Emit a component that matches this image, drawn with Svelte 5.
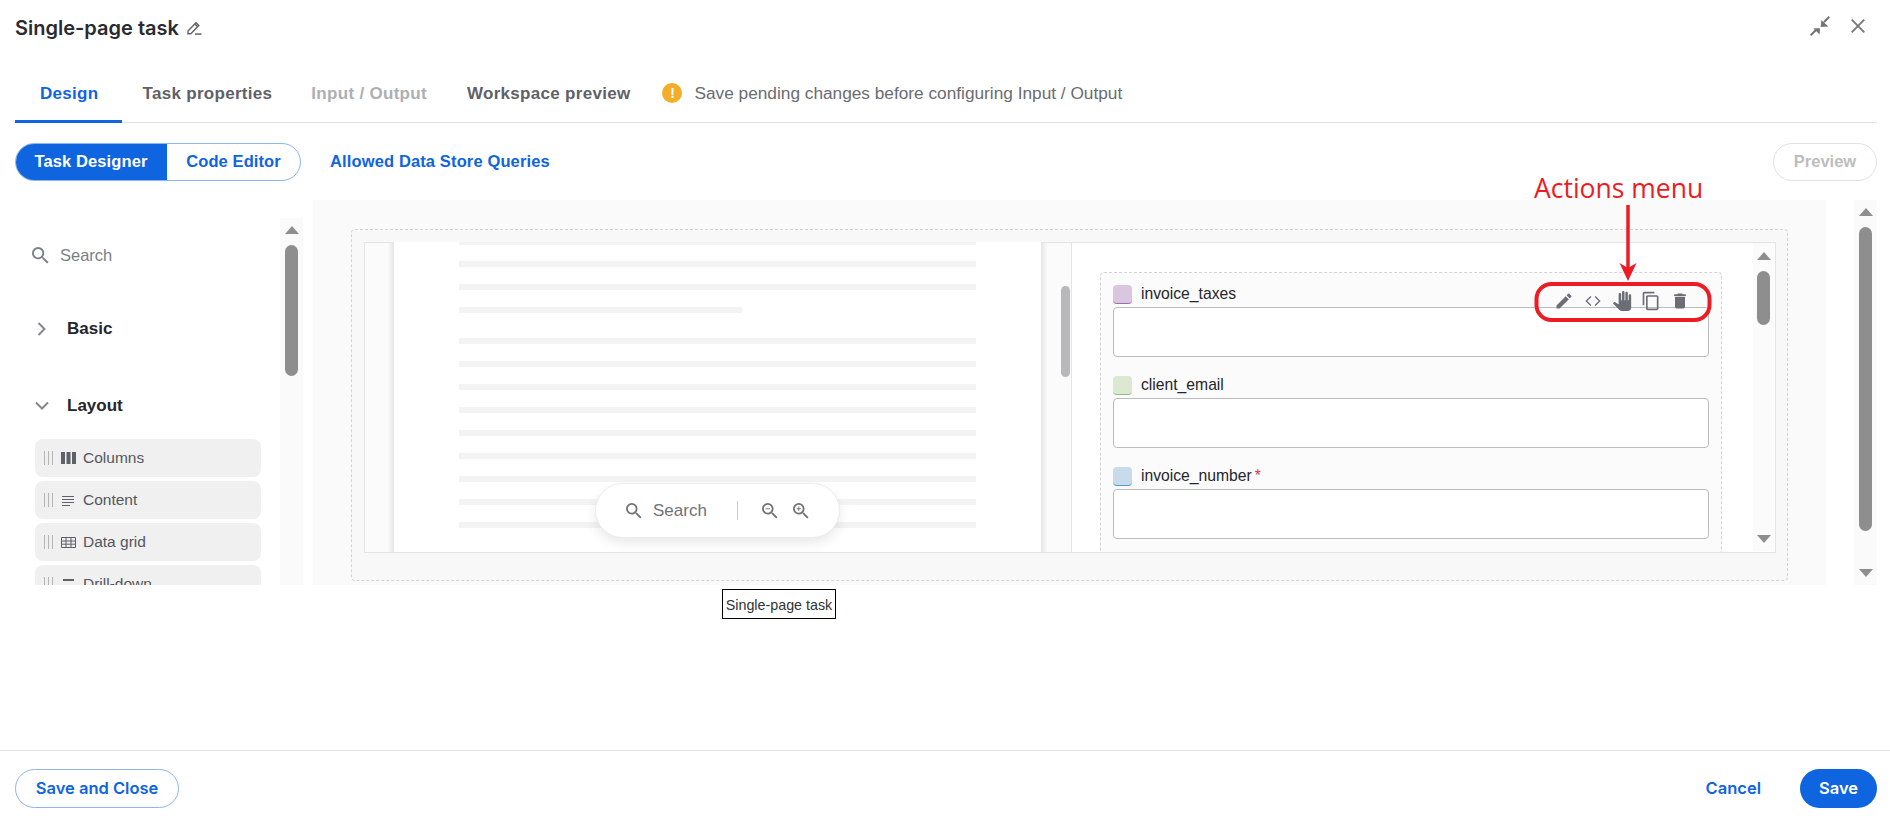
<script>
  const sp = 'M15.5 14h-.79l-.28-.27A6.471 6.471 0 0 0 16 9.5 6.5 6.5 0 1 0 9.5 16c1.61 0 3.09-.59 4.23-1.57l.27.28v.79l5 4.99L20.49 19l-4.99-5zm-6 0C7.01 14 5 11.99 5 9.5S7.01 5 9.5 5 14 7.01 14 9.5 11.99 14 9.5 14z';
  const lines = [
    { w: 100, h: 2, cls: 'first' }, { w: 100 }, { w: 100 }, { w: 283, px: true }, { w: 100, cls: 'para' },
    { w: 100 }, { w: 100 }, { w: 100 }, { w: 100 }, { w: 100 }, { w: 100 }, { w: 100 }, { w: 100 }
  ];
  const items = [
    { label: 'Columns', icon: 'cols' }, { label: 'Content', icon: 'content' },
    { label: 'Data grid', icon: 'grid' }, { label: 'Drill-down', icon: 'drill' }
  ];
  const fields = [
    { name: 'invoice_taxes', cls: 'purple', tools: true },
    { name: 'client_email', cls: 'green' },
    { name: 'invoice_number', cls: 'blue', req: true }
  ];
</script>

<div class="app">
  <header class="head">
    <div class="title-wrap">
      <h1>Single-page task</h1>
      <svg class="title-edit" viewBox="0 0 15 14" width="15" height="14" aria-hidden="true">
        <path d="M1 10l8-8.200 2.800 2.800-8 8.200H1z M7.800 3l2.800 2.800" fill="none" stroke="#5f6268" stroke-width="1.400"/>
        <path d="M8 12.300h6.500v1.500H8z" fill="#5f6268"/>
      </svg>
    </div>
    <div class="win-actions">
      <svg viewBox="0 0 20 20" width="20" height="20" aria-hidden="true">
        <path d="M.7 19.300L6 14M19.300.7L14 6" stroke="#757575" stroke-width="2" fill="none"/>
        <path d="M10.700 11l.7-7 6.900 6.400zM10 12.300H3.300l6.300 6.200z" fill="#757575"/>
      </svg>
      <svg viewBox="0 0 14 14" width="14" height="14" aria-hidden="true">
        <path d="M.7.7l12.600 12.600M13.300.7L.7 13.300" stroke="#757575" stroke-width="1.800" fill="none"/>
      </svg>
    </div>
  </header>

  <nav class="tabs">
    <span class="tab active">Design</span>
    <span class="tab">Task properties</span>
    <span class="tab disabled">Input / Output</span>
    <span class="tab">Workspace preview</span>
    <span class="notice">
      <span class="warn">!</span>
      Save pending changes before configuring Input / Output
    </span>
  </nav>

  <div class="toolbar">
    <div class="segment">
      <span class="seg on">Task Designer</span>
      <span class="seg">Code Editor</span>
    </div>
    <span class="allowed">Allowed Data Store Queries</span>
    <span class="preview">Preview</span>
  </div>

  <div class="workspace">
    <aside class="palette">
      <div class="palette-list">
        <div class="pal-search">
          <svg viewBox="3 3 18 18" width="17" height="17" aria-hidden="true"><path d={sp} fill="#7b7f86"/></svg>
          <span>Search</span>
        </div>
        <div class="group basic">
          <svg viewBox="0 0 10 14" width="10" height="14" aria-hidden="true"><path d="M1.500 1l6 6-6 6" fill="none" stroke="#85878c" stroke-width="2"/></svg>
          <strong>Basic</strong>
        </div>
        <div class="group layout">
          <svg viewBox="0 0 14 10" width="14" height="10" aria-hidden="true"><path d="M1 1.500l6 6 6-6" fill="none" stroke="#85878c" stroke-width="2"/></svg>
          <strong>Layout</strong>
        </div>
        <div class="items">
          {#each items as it}
            <div class="item">
              <span class="grip"><i></i><i></i><i></i></span>
              <svg class="item-ic" viewBox="0 0 15 12" width="15" height="12" aria-hidden="true">
                {#if it.icon === 'cols'}
                  <path d="M0 0h4v12H0zM5.500 0h4v12h-4zM11 0h4v12h-4z" fill="#5f6168"/>
                {:else if it.icon === 'content'}
                  <path d="M1 2h12v1H1zM1 5h12v1H1zM1 8h12v1H1zM1 11h8v1H1z" fill="#5f6168"/>
                {:else if it.icon === 'grid'}
                  <path d="M.5 1.500h14v10H.5zM.5 5h14M.5 8.200h14M5 1.500v10M10 1.500v10" fill="none" stroke="#5f6168"/>
                {:else}
                  <path d="M2 1h11v2H2z" fill="#5f6168"/>
                {/if}
              </svg>
              <span>{it.label}</span>
            </div>
          {/each}
        </div>
      </div>
      <div class="track pal-track">
        <span class="arrow up"></span>
        <span class="thumb pal-thumb"></span>
      </div>
    </aside>

    <section class="canvas">
      <div class="dashed">
        <div class="frame">
          <div class="doc">
            <div class="gutter"></div>
            <div class="page">
              {#each lines as l}
                <div class="line {l.cls ?? ''}" style:width={l.px ? l.w + 'px' : '100%'}></div>
              {/each}
            </div>
            <div class="gutter right"><span class="doc-thumb"></span></div>
            <div class="pill">
              <svg viewBox="3 3 18 18" width="16" height="16" aria-hidden="true"><path d={sp} fill="#6f7278"/></svg>
              <span class="pill-text">Search</span>
              <span class="pill-div"></span>
              <svg viewBox="3 3 18 18" width="16" height="16" aria-hidden="true"><path d={sp} fill="#6f7278"/><path d="M7 9h5v1H7z" fill="#6f7278"/></svg>
              <svg viewBox="3 3 18 18" width="16" height="16" aria-hidden="true"><path d={sp} fill="#6f7278"/><path d="M12 10h-2v2H9v-2H7V9h2V7h1v2h2v1z" fill="#6f7278"/></svg>
            </div>
          </div>
          <div class="form-pane">
            <div class="form-box">
              {#each fields as f}
                <div class="field">
                  <div class="field-label">
                    <span class="swatch {f.cls}"></span>
                    <span class="field-name">{f.name}</span>
                    {#if f.req}<span class="req">*</span>{/if}
                  </div>
                  <div class="input"></div>
                  {#if f.tools}
                    <div class="tools">
                      <svg viewBox="0 0 24 24" width="20" height="20" aria-hidden="true"><path d="M3 17.250V21h3.750L17.810 9.940l-3.750-3.750L3 17.250zM20.710 7.040a1 1 0 0 0 0-1.410l-2.340-2.340a1 1 0 0 0-1.410 0l-1.830 1.830 3.750 3.750 1.830-1.830z"/></svg>
                      <svg viewBox="0 0 24 24" width="20" height="20" aria-hidden="true"><path d="M9.500 6.500L4 12l5.500 5.500M14.500 6.500L20 12l-5.500 5.500" fill="none" stroke="#6b6e76" stroke-width="1.600"/></svg>
                      <svg viewBox="0 0 24 24" width="20" height="20" aria-hidden="true"><path d="M23 5.500V20c0 2.200-1.800 4-4 4h-7.300c-1.080 0-2.100-.43-2.850-1.190L1 14.830s1.260-1.230 1.300-1.250c.22-.19.49-.29.79-.29.22 0 .42.060.6.160.040.010 4.310 2.460 4.310 2.460V4c0-.83.67-1.500 1.500-1.500S11 3.170 11 4v7h1V1.500c0-.83.67-1.500 1.500-1.500S15 .67 15 1.500V11h1V2.500c0-.83.67-1.500 1.500-1.500s1.500.67 1.500 1.500V11h1V5.500c0-.83.67-1.500 1.500-1.500s1.500.67 1.500 1.500z"/></svg>
                      <svg viewBox="0 0 24 24" width="20" height="20" aria-hidden="true"><path d="M16 1H4c-1.100 0-2 .9-2 2v14h2V3h12V1zm3 4H8c-1.100 0-2 .9-2 2v14c0 1.100.9 2 2 2h11c1.100 0 2-.9 2-2V7c0-1.100-.9-2-2-2zm0 16H8V7h11v14z"/></svg>
                      <svg viewBox="0 0 24 24" width="20" height="20" aria-hidden="true"><path d="M6 19c0 1.100.9 2 2 2h8c1.100 0 2-.9 2-2V7H6v12zM19 4h-3.500l-1-1h-5l-1 1H5v2h14V4z"/></svg>
                    </div>
                  {/if}
                </div>
              {/each}
            </div>
            <div class="track form-track">
              <span class="arrow up"></span>
              <span class="thumb form-thumb"></span>
              <span class="arrow down"></span>
            </div>
          </div>
        </div>
      </div>
    </section>

    <div class="track main-track">
      <span class="arrow up"></span>
      <span class="thumb main-thumb"></span>
      <span class="arrow down"></span>
    </div>
  </div>

  <div class="caption">Single-page task</div>

  <footer class="foot">
    <span class="btn-outline">Save and Close</span>
    <span class="cancel">Cancel</span>
    <span class="btn-save">Save</span>
  </footer>

  <div class="note">Actions menu</div>
  <svg class="marks" viewBox="0 0 190 125" width="190" height="125" aria-hidden="true">
    <path d="M96 1v64" stroke="#ed1c24" stroke-width="3.500" fill="none"/>
    <path d="M96 77l-8.500-18 8.500 5 8.500-5z" fill="#ed1c24"/>
    <rect x="4.500" y="80" width="173" height="36" rx="15" fill="none" stroke="#ed1c24" stroke-width="4"/>
  </svg>
</div>

<style>
  :global(body) { margin: 0; background: #fff; }
  .app {
    position: relative;
    height: 818px;
    overflow: hidden;
    display: flex;
    flex-direction: column;
    font-family: "Liberation Sans", Arial, sans-serif;
    color: #25262b;
  }
  .head {
    height: 56px;
    flex: none;
    display: flex;
    align-items: center;
    justify-content: space-between;
    padding: 0 25px 0 15px;
    box-sizing: border-box;
  }
  .title-wrap { display: flex; align-items: center; gap: 8px; }
  h1 { margin: 0; font: 600 20px/1 Inter, sans-serif; color: #2a2b30; }
  .title-edit { margin-top: -1px; }
  .win-actions { display: flex; align-items: center; gap: 21px; margin-top: -4px; }

  .tabs {
    height: 67px;
    flex: none;
    box-sizing: border-box;
    margin: 0 13px 0 15px;
    display: flex;
    align-items: stretch;
    border-bottom: 1px solid #e2e2e2;
  }
  .tab {
    display: flex;
    align-items: center;
    padding: 11px 20px 0;
    font-size: 17px;
    font-weight: 700;
    letter-spacing: .3px;
    color: #5f6168;
    margin-bottom: -1px;
    border-bottom: 3px solid transparent;
  }
  .tab.active { color: #0f64e0; padding: 11px 24px 0 25px; border-bottom-color: #0f64e0; }
  .tab.disabled { color: #aeafb2; margin-left: -1px; }
  .notice {
    margin-left: 12px;
    display: flex;
    align-items: center;
    gap: 12px;
    padding-top: 11px;
    font-size: 17.250px;
    color: #6a6c72;
    margin-bottom: 3px;
  }
  .warn {
    width: 20px;
    height: 20px;
    border-radius: 50%;
    background: #f3ae28;
    color: #fff;
    font-size: 14px;
    font-weight: 700;
    display: flex;
    align-items: center;
    justify-content: center;
  }

  .toolbar {
    flex: none;
    height: 38px;
    margin: 20px 13px 0 15px;
    display: flex;
    align-items: center;
    font-size: 16.500px;
    font-weight: 700;
  }
  .segment {
    width: 286px;
    height: 38px;
    display: flex;
    border: 1px solid #8fb5ee;
    border-radius: 19px;
    box-sizing: border-box;
    overflow: hidden;
  }
  .seg { display: flex; align-items: center; justify-content: center; color: #0f64e0; flex: 1; padding-bottom: 2px; box-sizing: border-box; letter-spacing: .1px; }
  .seg.on { flex: none; width: 152px; margin: -1px 0 -1px -1px; background: #0f64e0; color: #fff; }
  .allowed { margin-left: 29px; color: #0f64e0; padding-bottom: 2px; letter-spacing: .13px; }
  .preview {
    margin-left: auto;
    width: 104px;
    height: 38px;
    box-sizing: border-box;
    border: 1px solid #e2e2e2;
    border-radius: 19px;
    color: #bdbdbd;
    display: flex;
    align-items: center;
    justify-content: center;
    padding-bottom: 2px;
  }

  .workspace {
    flex: none;
    height: 385px;
    margin: 19px 13px 0 15px;
    display: flex;
  }
  .palette { width: 298px; flex: none; padding-top: 18px; box-sizing: border-box; display: flex; }
  .palette-list { width: 265px; overflow: hidden; height: 367px; padding-left: 20px; box-sizing: border-box; }
  .pal-search {
    display: flex;
    align-items: center;
    height: 30px;
    margin-top: 22px;
    margin-left: -3px;
    gap: 11px;
    color: #7b7f86;
    font-size: 16.500px;
  }
  .group { display: flex; align-items: center; height: 24px; font-size: 17px; color: #25262b; }
  .group strong { font-weight: 700; }
  .basic { margin-top: 47px; }
  .basic svg { margin: 0 20px 0 2px; }
  .layout { margin-top: 53px; }
  .layout svg { margin: 0 18px 0 0; }
  .items { margin-top: 21px; display: flex; flex-direction: column; gap: 4px; }
  .item {
    height: 38px;
    flex: none;
    width: 226px;
    border-radius: 8px;
    background: #f0f0f0;
    display: flex;
    align-items: center;
    font-size: 15.500px;
    color: #55575d;
    padding-left: 9px;
    box-sizing: border-box;
  }
  .grip { display: flex; gap: 3px; height: 14px; margin-right: 8px; }
  .grip i { width: 1px; background: #b4b4b4; display: block; height: 14px; }
  .item-ic { margin-right: 7px; }

  .track {
    flex: none;
    width: 23px;
    display: flex;
    flex-direction: column;
    align-items: center;
    background: #fafafa;
    box-sizing: border-box;
  }
  .arrow { width: 0; height: 0; border-left: 7.500px solid transparent; border-right: 7.500px solid transparent; flex: none; }
  .arrow.up { border-bottom: 8px solid #8e8e8e; }
  .arrow.down { border-top: 8px solid #8e8e8e; margin-top: auto; }
  .thumb { width: 13px; border-radius: 7px; background: #8e8e8e; flex: none; }
  .pal-track { height: 367px; padding-top: 8px; margin-right: 10px; }
  .pal-thumb { height: 131px; margin-top: 11px; }
  .main-track { height: 385px; margin-left: 28px; padding: 8px 0; }
  .main-thumb { height: 304px; margin-top: 11px; }

  .canvas {
    width: 1513px;
    flex: none;
    height: 385px;
    background: #fafafa;
    padding: 29px 38px 4px 38px;
    box-sizing: border-box;
  }
  .dashed {
    height: 352px;
    box-sizing: border-box;
    border: 1px dashed #d4d4d4;
    border-radius: 4px;
    background: #f8f8f8;
    padding: 12px 11px 28px 12px;
  }
  .frame {
    height: 310px;
    border: 1px solid #e4e4e4;
    border-top: 0;
    background: #fff;
    display: flex;
    overflow: hidden;
  }
  .doc { position: relative; width: 707px; flex: none; display: flex; overflow: hidden; border-right: 1px solid #e4e4e4; box-sizing: border-box; }
  .gutter {
    width: 29px;
    flex: none;
    box-sizing: border-box;
    border-top: 1px solid #e4e4e4;
    background: linear-gradient(to right, #fbfbfb 78%, #e6e5e3 100%);
    position: relative;
  }
  .gutter.right { width: 30px; background: linear-gradient(to right, #e6e5e3 0, #fbfbfb 22%); }
  .page {
    width: 647px;
    flex: none;
    background: #fff;
    padding: 0 65px 0 65px;
    box-sizing: border-box;
    display: flex;
    flex-direction: column;
    gap: 17px;
    position: relative;
  }
  .line { height: 6px; background: #f3f3f3; flex: none; }
  .line.first { height: 3px; margin-bottom: -1px; }
  .line.para { margin-top: 8px; }
  .doc-thumb {
    position: absolute;
    left: 20px;
    top: 43px;
    width: 9px;
    height: 91px;
    border-radius: 5px;
    background: #b7b8ba;
  }
  .pill {
    position: absolute;
    left: 230px;
    top: 241px;
    width: 245px;
    height: 55px;
    box-sizing: border-box;
    background: #fff;
    border: 1px solid #ececec;
    border-radius: 28px;
    box-shadow: 0 5px 12px rgba(0,0,0,.09);
    display: flex;
    align-items: center;
    padding-left: 30px;
    color: #6f7278;
    font-size: 17px;
  }
  .pill-text { margin-left: 11px; }
  .pill-div { width: 1px; height: 19px; background: #c9c9c9; margin: 0 24px 0 30px; }
  .pill svg:last-child { margin-left: 15px; }

  .form-pane { flex: 1; display: flex; padding-left: 28px; min-width: 0; box-sizing: border-box; border-top: 1px solid #e4e4e4; }
  .form-box {
    width: 622px;
    margin-top: 29px;
    height: 400px;
    box-sizing: border-box;
    flex: none;
    border: 1px dashed #d4d4d4;
    border-radius: 4px;
    background: #fbfbfb;
    padding: 12px;
  }
  .field { position: relative; height: 91px; }
  .field-label { display: flex; align-items: center; height: 19px; font-size: 15.700px; color: #25262b; gap: 9px; }
  .field-name { margin-top: -2px; }
  .req { color: #e0344d; margin: -2px 0 0 -6px; }
  .swatch { width: 19px; height: 19px; border-radius: 4px; box-sizing: border-box; border-bottom: 1.500px solid; }
  .purple { background: #d9c7df; border-color: #9c6fa9; }
  .green { background: #dde8d2; border-color: #94bd80; }
  .blue { background: #c7dbea; border-color: #4d9bd0; }
  .input {
    height: 50px;
    margin-top: 3px;
    background: #fff;
    border: 1.500px solid #bcbcbc;
    border-radius: 4px;
    box-sizing: border-box;
  }
  .tools {
    position: absolute;
    right: 19px;
    top: 6px;
    display: flex;
    gap: 9px;
  }
  .tools svg { fill: #6b6e76; }
  .form-track { width: 21px; height: 308px; margin-left: 31px; padding: 9px 0 8px; background: #fbfbfb; }
  .form-thumb { height: 54px; margin-top: 11px; }

  .caption {
    flex: none;
    align-self: flex-start;
    margin: 4px 0 0 722px;
    width: 114px;
    height: 30px;
    box-sizing: border-box;
    border: 1.500px solid #000;
    display: flex;
    align-items: center;
    justify-content: center;
    padding-top: 1px;
    font-size: 14.300px;
    color: #2f3238;
    background: #fff;
  }
  .foot {
    margin-top: auto;
    height: 68px;
    flex: none;
    box-sizing: border-box;
    border-top: 1px solid #e2e2e2;
    padding: 18px 13px 0 15px;
    display: flex;
    align-items: flex-start;
    font: 600 16.500px/1 Inter, sans-serif;
  }
  .btn-outline {
    width: 164px;
    height: 39px;
    box-sizing: border-box;
    border: 1px solid #8fb5ee;
    border-radius: 20px;
    color: #0f64e0;
    display: flex;
    align-items: center;
    justify-content: center;
  }
  .cancel { margin-left: auto; color: #0f64e0; height: 39px; display: flex; align-items: center; margin-right: 39px; }
  .btn-save {
    width: 77px;
    height: 39px;
    border-radius: 20px;
    background: #0f64e0;
    color: #fff;
    display: flex;
    align-items: center;
    justify-content: center;
  }

  .note {
    position: absolute;
    left: 1534px;
    top: 170px;
    font: 400 26.500px/36px "Open Sans", sans-serif;
    color: #ed1c24;
  }
  .marks { position: absolute; left: 1532px; top: 204px; }
</style>
